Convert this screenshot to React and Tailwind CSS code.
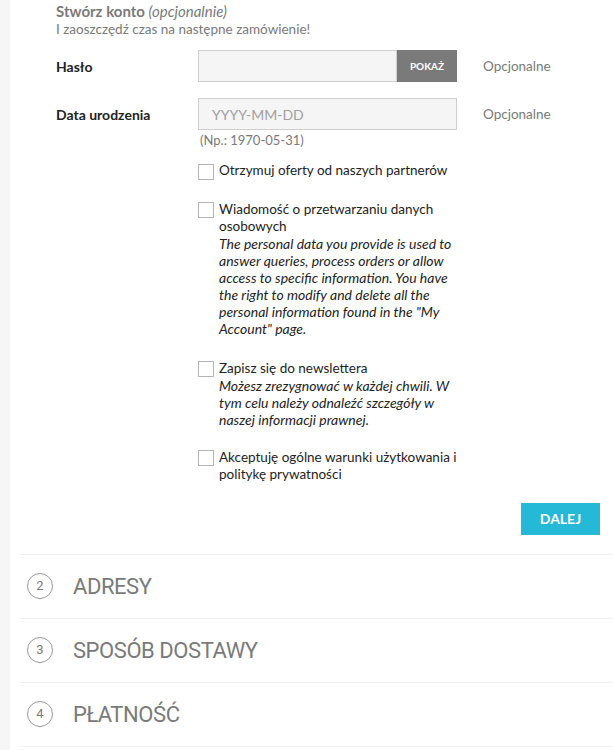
import React from 'react';

const font = { fontFamily: 'Lato, "Noto Sans", sans-serif' };

function Check({ children, className = '' }) {
  return (
    <label className={`flex items-start gap-[5px] ${className}`}>
      <span className="mt-[1.5px] w-4 h-4 shrink-0 border border-[#b5b5b5] bg-white" />
      <span className="w-[240px] leading-[17px] text-[13.5px]">{children}</span>
    </label>
  );
}

function Note({ children }) {
  return <em className="block text-[14px] leading-[17px]">{children}</em>;
}

function Step({ n, title }) {
  return (
    <div className="h-16 border-b border-[#efefef] flex items-center pl-[7px]">
      <span className="w-[26px] h-[26px] rounded-full border border-[#9a9a9a] flex items-center justify-center text-[13px] text-[#7a7a7a] [font-family:Roboto,sans-serif]">
        {n}
      </span>
      <span className="ml-[20px] text-[22px] text-[#7a7a7a] tracking-[-0.02em] [font-family:Roboto,sans-serif]">
        {title}
      </span>
    </div>
  );
}

export default function App() {
  return (
    <div className="flex min-h-[750px] bg-[#f6f6f6]" style={font}>
      <div className="w-[10px] shrink-0" />
      <div className="flex-1 bg-white">
        <div className="pl-[46px] pt-[1px] text-[13.5px] text-[#232323]">
          <p className="text-[15px] font-bold text-[#7a7a7a] leading-[20px]">
            Stwórz konto <span className="italic font-normal">(opcjonalnie)</span>
          </p>
          <p className="text-[#7a7a7a] leading-[16px]">I zaoszczędź czas na następne zamówienie!</p>

          <div className="flex items-center mt-[13px]">
            <span className="w-[142px] font-bold text-[14px]">Hasło</span>
            <div className="flex w-[259px] h-[32px]">
              <div className="flex-1 bg-[#f5f5f5] border border-[#cfcfcf]" />
              <button className="w-[60px] bg-[#7a7a7a] text-white text-[10px] font-bold">POKAŻ</button>
            </div>
            <span className="ml-[26px] text-[#7a7a7a]">Opcjonalne</span>
          </div>

          <div className="flex items-center mt-[16px]">
            <span className="w-[142px] font-bold text-[14px]">Data urodzenia</span>
            <div className="w-[259px] h-[32px] bg-[#f5f5f5] border border-[#cfcfcf] flex items-center pl-[13px] text-[14px] text-[#a0a0a0]">
              YYYY-MM-DD
            </div>
            <span className="ml-[26px] text-[#7a7a7a]">Opcjonalne</span>
          </div>
          <p className="ml-[144px] mt-[2px] text-[13px] text-[#7a7a7a] leading-[16px]">(Np.: 1970-05-31)</p>

          <div className="ml-[142px] mt-[14px] flex flex-col gap-[21px]">
            <Check>Otrzymuj oferty od naszych partnerów</Check>
            <Check>
              Wiadomość o przetwarzaniu danych osobowych
              <Note>
                The personal data you provide is used to answer queries, process orders or allow access to
                specific information. You have the right to modify and delete all the personal information
                found in the "My Account" page.
              </Note>
            </Check>
            <Check className="mt-[2px]">
              Zapisz się do newslettera
              <Note>Możesz zrezygnować w każdej chwili. W tym celu należy odnaleźć szczegóły w naszej informacji prawnej.</Note>
            </Check>
            <Check>Akceptuję ogólne warunki użytkowania i politykę prywatności</Check>
          </div>

          <div className="flex justify-end pr-[13px] mt-[20px]">
            <button className="w-[79px] h-[32px] bg-[#24b9d7] text-white font-bold text-[14px]">DALEJ</button>
          </div>
        </div>

        <div className="ml-[10px] mt-[19px] border-t border-[#efefef]">
          <Step n="2" title="ADRESY" />
          <Step n="3" title="SPOSÓB DOSTAWY" />
          <Step n="4" title="PŁATNOŚĆ" />
        </div>
      </div>
    </div>
  );
}
